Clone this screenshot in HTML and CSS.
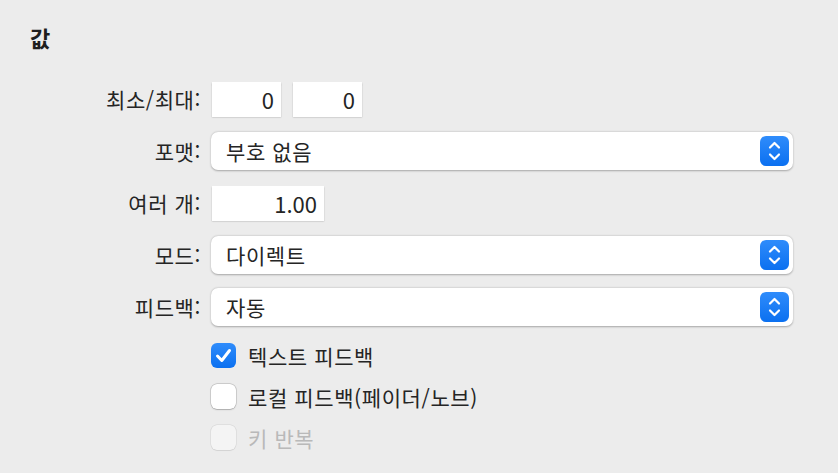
FILE: index.html
```html
<!DOCTYPE html>
<html lang="ko">
<head>
<meta charset="utf-8">
<title>값</title>
<link rel="stylesheet" href="styles.css">
</head>
<body>
<div class="panel">
  <h2 class="title">값</h2>
  <div class="form">
    <div class="label">최소/최대:</div>
    <div class="ctrl">
      <div class="field small">0</div>
      <div class="field small">0</div>
    </div>

    <div class="label">포맷:</div>
    <div class="ctrl">
      <div class="popup">
        <span>부호 없음</span>
        <span class="stepper"><svg width="29" height="30" viewBox="0 0 29 30"><path d="M10 11.5 L14.5 7 L19 11.5 M10 18.5 L14.5 23 L19 18.5" fill="none" stroke="#fff" stroke-width="2.2" stroke-linecap="round" stroke-linejoin="round"/></svg></span>
      </div>
    </div>

    <div class="label">여러 개:</div>
    <div class="ctrl">
      <div class="field wide">1.00</div>
    </div>

    <div class="label">모드:</div>
    <div class="ctrl">
      <div class="popup">
        <span>다이렉트</span>
        <span class="stepper"><svg width="29" height="30" viewBox="0 0 29 30"><path d="M10 11.5 L14.5 7 L19 11.5 M10 18.5 L14.5 23 L19 18.5" fill="none" stroke="#fff" stroke-width="2.2" stroke-linecap="round" stroke-linejoin="round"/></svg></span>
      </div>
    </div>

    <div class="label">피드백:</div>
    <div class="ctrl">
      <div class="popup">
        <span>자동</span>
        <span class="stepper"><svg width="29" height="30" viewBox="0 0 29 30"><path d="M10 11.5 L14.5 7 L19 11.5 M10 18.5 L14.5 23 L19 18.5" fill="none" stroke="#fff" stroke-width="2.2" stroke-linecap="round" stroke-linejoin="round"/></svg></span>
      </div>
    </div>
  </div>

  <div class="checks">
    <div class="check">
      <span class="box checked"><svg width="25" height="25" viewBox="0 0 25 25"><path d="M6.5 13 L10.8 17.5 L18.5 7.5" fill="none" stroke="#fff" stroke-width="3" stroke-linecap="round" stroke-linejoin="round"/></svg></span>
      <span class="ctext">텍스트 피드백</span>
    </div>
    <div class="check">
      <span class="box"></span>
      <span class="ctext">로컬 피드백(페이더/노브)</span>
    </div>
    <div class="check disabled">
      <span class="box"></span>
      <span class="ctext">키 반복</span>
    </div>
  </div>
</div>
</body>
</html>
```

FILE: styles.css
```css
html, body {
  margin: 0;
  padding: 0;
}
body {
  background: #ececec;
  font-family: "Noto Sans CJK KR", "Noto Sans", sans-serif;
  color: #252525;
  width: 838px;
  height: 473px;
  overflow: hidden;
}
.panel {
  padding: 23px 45px 0 30px;
}
.title {
  margin: 0;
  font-size: 22px;
  font-weight: 700;
  line-height: 28px;
  color: #1e1e1e;
}
.form {
  margin-top: 29px;
  display: grid;
  grid-template-columns: 171px 1fr;
  column-gap: 10px;
  row-gap: 14px;
}
.label {
  height: 38px;
  display: flex;
  align-items: center;
  justify-content: flex-end;
  font-size: 21px;
  letter-spacing: 0.6px;
  white-space: nowrap;
}
.ctrl {
  height: 38px;
  display: flex;
  align-items: center;
  gap: 11px;
}
.field {
  height: 35px;
  background: #fff;
  box-shadow: 0 0.5px 1.5px rgba(0,0,0,0.28);
  font-size: 22px;
  display: flex;
  align-items: center;
  justify-content: flex-end;
  padding-right: 7px;
  box-sizing: border-box;
  margin-left: 1px;
}
.field.small { width: 69px; }
.field.wide { width: 112px; }
.popup {
  flex: 1;
  height: 38px;
  background: #fff;
  border-radius: 7px;
  box-shadow: 0 0.5px 2px rgba(0,0,0,0.3);
  display: flex;
  align-items: center;
  justify-content: space-between;
  padding: 0 4px 0 15px;
  box-sizing: border-box;
  font-size: 21px;
  letter-spacing: 0.6px;
}
.stepper {
  width: 29px;
  height: 30px;
  border-radius: 6px;
  background: linear-gradient(#2f8cfb, #0b70f0);
  display: flex;
}
.checks {
  margin-left: 181px;
  margin-top: 17px;
  display: flex;
  flex-direction: column;
  gap: 16px;
}
.check {
  display: flex;
  align-items: center;
  gap: 12px;
  height: 25px;
}
.box {
  width: 25px;
  height: 25px;
  box-sizing: border-box;
  border-radius: 6px;
  background: #fff;
  box-shadow: 0 0 0 0.5px rgba(0,0,0,0.22), 0 0.5px 1.5px rgba(0,0,0,0.18);
  display: flex;
}
.box.checked {
  background: linear-gradient(#2f8cfb, #0b70f0);
  box-shadow: none;
}
.ctext {
  font-size: 21px;
  letter-spacing: 0.6px;
  white-space: nowrap;
}
.check.disabled .box {
  background: #f4f4f4;
  box-shadow: 0 0 0 0.5px rgba(0,0,0,0.1), 0 0.5px 1px rgba(0,0,0,0.06);
}
.check.disabled .ctext {
  color: #b9b9b9;
}
```
